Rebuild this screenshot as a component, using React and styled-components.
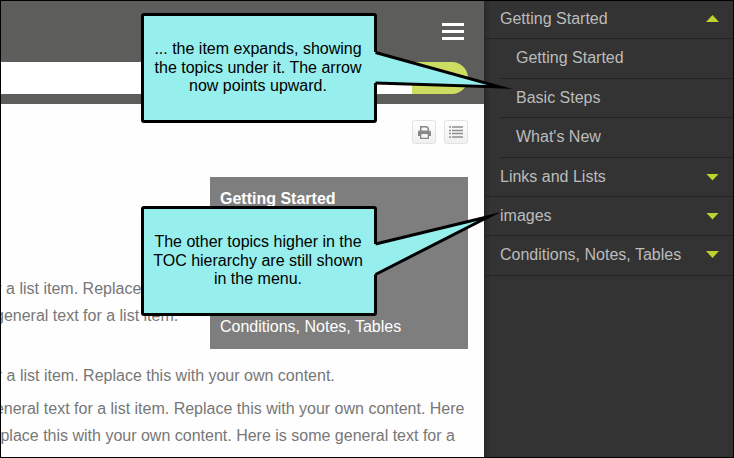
import React from "react";
import styled, { createGlobalStyle } from "styled-components";

const Global = createGlobalStyle`
  * { box-sizing: border-box; }
  body { margin: 0; font-family: "Liberation Sans", Arial, sans-serif; font-size: 16px; }
`;

const Frame = styled.div`
  position: relative;
  display: flex;
  width: 734px;
  height: 458px;
  border: 1px solid #000;
  overflow: hidden;
  background: #fefefe;
`;

const Main = styled.main`
  width: 483px;
  overflow: hidden;
`;

const Header = styled.header`
  display: flex;
  flex-direction: column;
  height: 103px;
  background: #5d5d5b;
`;

const TopBar = styled.div`
  display: flex;
  justify-content: flex-end;
  height: 61px;
  padding: 22px 20px 0 0;
`;

const MenuButton = styled.div`
  display: flex;
  flex-direction: column;
  gap: 4px;
  width: 22px;
`;

const MenuBar = styled.span`
  height: 3px;
  background: #fff;
`;

const SearchBar = styled.div`
  display: flex;
  height: 32px;
  padding-right: 16px;
`;

const SearchField = styled.div`
  flex: 1;
  background: #fff;
`;

const SearchButton = styled.div`
  width: 56px;
  border-radius: 0 16px 16px 0;
  background: #cddd62;
`;

const Toolbar = styled.div`
  display: flex;
  justify-content: flex-end;
  gap: 8px;
  height: 73px;
  padding: 16px 16px 0 0;
`;

const ToolButton = styled.div`
  display: flex;
  width: 24px;
  height: 24px;
  border: 1px solid #e2e2e2;
  border-radius: 3px;
  background: linear-gradient(#fefefe, #f0f0f0);
`;

const Article = styled.div`
  display: flex;
  justify-content: space-between;
  height: 172px;
`;

const Copy = styled.div`
  color: #777;
  line-height: 27px;
  white-space: pre;
`;

const Paragraph = styled.p`
  margin: ${(p) => p.$top}px 0 0;
`;

const Line = styled.span`
  display: block;
  margin-left: ${(p) => p.$shift}px;
`;

const TopicBox = styled.aside`
  display: flex;
  flex-direction: column;
  justify-content: space-between;
  width: 258px;
  height: 172px;
  margin-right: 16px;
  padding: 13px 10px 13px;
  background: #7e7e7e;
  color: #fff;
  line-height: 18px;
`;

const TopicTitle = styled.strong`
  font-weight: 700;
`;

const Sidebar = styled.nav`
  flex: 1;
  background: linear-gradient(90deg, #272829, #333 6px);
  color: #bcbcbc;
`;

const MenuRow = styled.div`
  display: flex;
  align-items: center;
  justify-content: space-between;
  height: ${(p) => p.$height}px;
  margin-left: ${(p) => (p.$inset ? 16 : 0)}px;
  padding: 0 14px ${(p) => p.$lift}px 16px;
  border-bottom: 1px solid #242424;
`;

const Arrow = styled.span`
  width: 13px;
  height: 7px;
  background: #bdd22b;
  clip-path: ${(p) => (p.$up ? "polygon(50% 0, 100% 100%, 0 100%)" : "polygon(0 0, 100% 0, 50% 100%)")};
`;

const Callout = styled.div`
  position: absolute;
  left: 140px;
  top: ${(p) => p.$top}px;
  width: 236px;
  height: 110px;
  padding: 24px 2px 0 0;
  border: 3px solid #000;
  border-radius: 3px;
  background: #96efed;
  color: #000;
  line-height: 18.5px;
  text-align: center;
  white-space: pre;
`;

const Tail = styled.svg`
  position: absolute;
  left: 369px;
  top: ${(p) => p.$top}px;
`;

const menu = [
  { label: "Getting Started", height: 38, lift: 2, up: true },
  { label: "Getting Started", height: 40, lift: 2, inset: true },
  { label: "Basic Steps", height: 39, lift: 0, inset: true },
  { label: "What's New", height: 40, lift: 2, inset: true },
  { label: "Links and Lists", height: 39, lift: 0 },
  { label: "images", height: 39, lift: 0 },
  { label: "Conditions, Notes, Tables", height: 40, lift: 2 },
];

const PrintIcon = () => (
  <svg width="22" height="22" viewBox="0 0 22 22">
    <path d="M6 9.5h10q2 0 2 2V15h-3v-2H8v2H5v-3.500q0-2 1-2z" fill="#878787" />
    <path d="M7.750 10V5.750h6l1.500 1.500V10M7.750 13v4.250h7.500V13" fill="none" stroke="#878787" strokeWidth="1.500" />
    <path d="M8.500 14h6v2.500h-6z" fill="#f4f4f4" />
  </svg>
);

const ListIcon = () => (
  <svg width="22" height="22" viewBox="0 0 22 22">
    <path
      d="M4 6h2M4 9.500h2M4 12.500h2M4 16h2M7 6h11M7 9.500h11M7 12.500h11M7 16h11"
      stroke="#8f8f8f"
      strokeWidth="1.500"
    />
  </svg>
);

export default function App() {
  return (
    <>
      <Global />
      <Frame>
        <Main>
          <Header>
            <TopBar>
              <MenuButton>
                <MenuBar />
                <MenuBar />
                <MenuBar />
              </MenuButton>
            </TopBar>
            <SearchBar>
              <SearchField />
              <SearchButton />
            </SearchBar>
          </Header>
          <Toolbar>
            <ToolButton><PrintIcon /></ToolButton>
            <ToolButton><ListIcon /></ToolButton>
          </Toolbar>
          <Article>
            <Copy>
              <Paragraph $top={98}>
                <Line $shift={-18}>for a list item. Replace this</Line>
                <Line $shift={-6}>general text for a list item.</Line>
              </Paragraph>
            </Copy>
            <TopicBox>
              <TopicTitle>Getting Started</TopicTitle>
              <span>Conditions, Notes, Tables</span>
            </TopicBox>
          </Article>
          <Copy>
            <Paragraph $top={13}>
              <Line $shift={-17.5}>for a list item. Replace this with your own content.</Line>
            </Paragraph>
            <Paragraph $top={6}>
              <Line $shift={-15}>general text for a list item. Replace this with your own content. Here</Line>
              <Line $shift={-21}>Replace this with your own content. Here is some general text for a</Line>
              <Line $shift={-8}>content.</Line>
            </Paragraph>
          </Copy>
        </Main>
        <Sidebar>
          {menu.map((item, i) => (
            <MenuRow key={i} $height={item.height} $lift={item.lift} $inset={item.inset}>
              {item.label}
              {!item.inset && <Arrow $up={item.up} />}
            </MenuRow>
          ))}
        </Sidebar>
        <Callout $top={12}>
          <div>... the item expands, showing</div>
          <div>the topics under it. The arrow</div>
          <div>now points upward.</div>
        </Callout>
        <Tail $top={47} width="150" height="45">
          <path d="M3 4H5.500L130 39L5.500 35H3Z" fill="#96efed" />
          <path d="M5.500 4.500L130 39L5.500 35" fill="none" stroke="#000" strokeWidth="3" strokeMiterlimit="20" />
        </Tail>
        <Callout $top={205}>
          <div>The other topics higher in the</div>
          <div>TOC hierarchy are still shown</div>
          <div>in the menu.</div>
        </Callout>
        <Tail $top={205} width="140" height="75">
          <path d="M3 38H5.500L119 10.500L5.500 68.500H3Z" fill="#96efed" />
          <path d="M5.500 38L119 10.500L5.500 68.500" fill="none" stroke="#000" strokeWidth="3" strokeMiterlimit="20" />
        </Tail>
      </Frame>
    </>
  );
}
